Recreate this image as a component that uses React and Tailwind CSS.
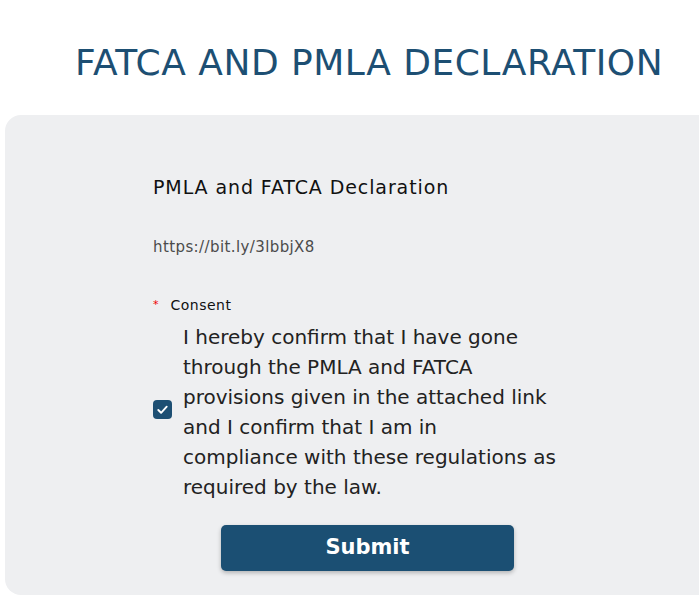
import React, { useState } from 'react';

const lines = [
  'I hereby confirm that I have gone',
  'through the PMLA and FATCA',
  'provisions given in the attached link',
  'and I confirm that I am in',
  'compliance with these regulations as',
  'required by the law.',
];

export default function App() {
  const [agreed, setAgreed] = useState(true);

  return (
    <div
      className="min-h-screen bg-white overflow-hidden"
      style={{ fontFamily: '"DejaVu Sans", sans-serif' }}
    >
      {/* Page title */}
      <h1 className="pt-[41px] pl-[75px] text-[36px] leading-[44px] text-[#1d4f73] tracking-[0.5px] whitespace-nowrap">
        FATCA AND PMLA DECLARATION
      </h1>

      {/* Form panel */}
      <div className="mt-[30px] ml-[5px] h-[480px] rounded-l-2xl bg-[#eeeff1] pt-[60px] pl-[148px]">
        <div className="w-[440px]">
          <h2 className="text-[19px] leading-6 tracking-[0.9px] text-[#111]">
            PMLA and FATCA Declaration
          </h2>

          <p className="mt-[38px] text-[15px] leading-5 tracking-[0.4px] text-[#4b4b4b]">
            https://bit.ly/3lbbjX8
          </p>

          <div className="mt-[38px] flex items-center gap-[12px] text-[14px] leading-5 text-[#111]">
            <span className="text-[#e00] text-[11px]">*</span>
            <span className="tracking-[0.5px]">Consent</span>
          </div>

          <label className="mt-[7px] flex items-center gap-[11px] cursor-pointer">
            <input
              type="checkbox"
              checked={agreed}
              onChange={() => setAgreed(!agreed)}
              className="sr-only"
            />
            <span className="mb-[5px] flex h-[19px] w-[19px] shrink-0 items-center justify-center rounded-[4px] bg-[#1d4f73]">
              {agreed && (
                <svg viewBox="0 0 16 16" className="h-[15px] w-[15px]" fill="none" stroke="white" strokeWidth="2" strokeLinecap="round" strokeLinejoin="round">
                  <path d="M3.5 8.5l3 3 6-6.5" />
                </svg>
              )}
            </span>
            <span className="text-[20px] leading-[30px] text-[#222]">
              {lines.map((l, i) => (
                <React.Fragment key={i}>
                  {l}
                  {i < lines.length - 1 && <br />}
                </React.Fragment>
              ))}
            </span>
          </label>

          <div className="mt-[23px] flex pl-[68px]">
            <button className="h-[46px] w-[293px] rounded-[5px] bg-[#1b4f73] text-[21px] font-semibold text-white shadow-[0_2px_4px_rgba(0,0,0,0.25)]">
              Submit
            </button>
          </div>
        </div>
      </div>
    </div>
  );
}
